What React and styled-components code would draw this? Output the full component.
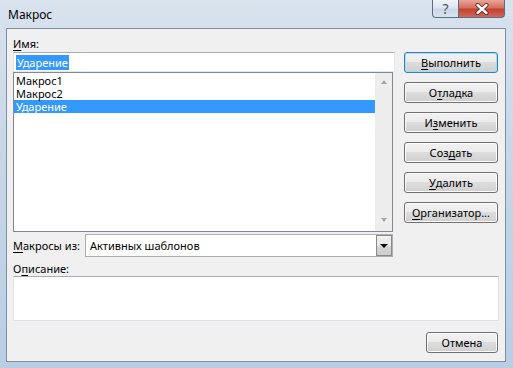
import React from "react";
import styled, { createGlobalStyle } from "styled-components";

const GlobalStyle = createGlobalStyle`
  html, body {
    margin: 0;
    padding: 0;
    background: #fff;
  }
  body {
    font-family: "Noto Sans", "Liberation Sans", sans-serif;
    font-size: 11px;
    color: #000;
  }
`;

const Window = styled.div`
  width: 513px;
  height: 368px;
  box-sizing: border-box;
  display: flex;
  flex-direction: column;
  padding: 0 7px 6px 6px;
  background: linear-gradient(180deg, #d9e3ee 0%, #cbd9e8 30%, #b9cde4 100%);
  overflow: hidden;
`;

const TitleBar = styled.div`
  height: 28px;
  display: flex;
  align-items: flex-start;
  position: relative;
`;

const Title = styled.div`
  font-size: 12px;
  line-height: 29px;
  padding-left: 2px;
  color: #000;
`;

const Caption = styled.div`
  position: absolute;
  right: 1px;
  top: 0;
  display: flex;
`;

const CapButton = styled.div`
  height: 18px;
  width: ${(p) => p.w}px;
  box-sizing: border-box;
  border: 1px solid #5b6d83;
  border-top: none;
  display: flex;
  align-items: center;
  justify-content: center;
  background: ${(p) =>
    p.close
      ? "linear-gradient(180deg, #e8a597 0%, #d46f60 45%, #c3422f 55%, #d2675a 100%)"
      : "linear-gradient(180deg, #eef3f8 0%, #dde6f0 45%, #cbd8e7 55%, #d8e3ef 100%)"};
  border-radius: ${(p) => (p.close ? "0 0 4px 0" : "0 0 0 4px")};
  border-left: ${(p) => (p.close ? "none" : "1px solid #5b6d83")};
  color: #46566a;
  font-size: 14px;
  line-height: 16px;
`;

const Client = styled.div`
  flex: 1;
  background: #f0f0f0;
  border: 1px solid #7e8ea3;
  display: flex;
  flex-direction: column;
  padding: 6px 7px 8px 6px;
`;

const TopGrid = styled.div`
  display: grid;
  grid-template-columns: 382px 94px;
  column-gap: 9px;
`;

const LeftCol = styled.div`
  display: flex;
  flex-direction: column;
`;

const RightCol = styled.div`
  display: flex;
  flex-direction: column;
  gap: 9px;
  padding-top: 17px;
`;

const Label = styled.div`
  height: ${(p) => p.h || 17}px;
  line-height: ${(p) => p.h || 17}px;
  white-space: nowrap;
  width: ${(p) => (p.w ? p.w + "px" : "auto")};
  flex-shrink: 0;
`;

const U = styled.span`
  text-decoration: underline;
  text-underline-offset: 2px;
`;

const TextBox = styled.div`
  height: 20px;
  box-sizing: border-box;
  background: #fff;
  border: 1px solid #abadb3;
  border-color: #abadb3 #e3e9ef #e3e9ef #e2e3ea;
  display: flex;
  align-items: center;
  padding-left: 2px;
`;

const Selected = styled.span`
  background: #3399ff;
  color: #fff;
  line-height: 15px;
  padding: 0 1px;
`;

const ListBox = styled.div`
  width: 380px;
  height: 160px;
  box-sizing: border-box;
  background: #fff;
  border: 1px solid #828790;
  display: flex;
`;

const Items = styled.div`
  flex: 1;
  padding-top: 1px;
`;

const Item = styled.div`
  height: 13px;
  line-height: 13px;
  padding-left: 2px;
  background: ${(p) => (p.active ? "#3399ff" : "transparent")};
  color: ${(p) => (p.active ? "#fff" : "#000")};
`;

const ScrollBar = styled.div`
  width: 17px;
  background: #ededed;
  display: flex;
  flex-direction: column;
  justify-content: space-between;
  align-items: center;
  padding: 7px 0 9px;
`;

const Arrow = styled.div`
  width: 0;
  height: 0;
  border-left: 3.5px solid transparent;
  border-right: 3.5px solid transparent;
  ${(p) =>
    p.up
      ? "border-bottom: 4px solid #a7a7a7;"
      : "border-top: 4px solid #a7a7a7;"}
`;

const Button = styled.div`
  height: 21px;
  width: ${(p) => (p.w ? p.w + "px" : "auto")};
  box-sizing: border-box;
  border: 1px solid ${(p) => (p.focus ? "#3c7fb1" : "#707070")};
  border-radius: 3px;
  background: linear-gradient(180deg, #f2f2f2 0%, #ebebeb 49%, #dddddd 50%, #cfcfcf 100%);
  box-shadow: inset 0 0 0 1px ${(p) => (p.focus ? "#9fdcf7" : "#fbfbfb")};
  display: flex;
  align-items: center;
  justify-content: center;
  white-space: nowrap;
  color: #000;
`;

const SourceRow = styled.div`
  display: flex;
  align-items: center;
  margin-top: 2px;
  height: 23px;
`;

const Combo = styled.div`
  width: 308px;
  height: 23px;
  box-sizing: border-box;
  background: #fff;
  border: 1px solid #abadb3;
  display: flex;
  align-items: center;
`;

const ComboText = styled.div`
  flex: 1;
  padding-left: 4px;
`;

const DropButton = styled.div`
  width: 16px;
  height: 21px;
  box-sizing: border-box;
  border: 1px solid #8a8a8a;
  background: linear-gradient(180deg, #f3f3f3 0%, #e6e6e6 50%, #d6d6d6 51%, #cdcdcd 100%);
  display: flex;
  align-items: center;
  justify-content: center;
`;

const DropArrow = styled.div`
  width: 0;
  height: 0;
  border-left: 4px solid transparent;
  border-right: 4px solid transparent;
  border-top: 4px solid #000;
`;

const DescBox = styled.div`
  width: 486px;
  height: 45px;
  box-sizing: border-box;
  background: #fff;
  border: 1px solid #abadb3;
  border-color: #abadb3 #dbdfe6 #dbdfe6 #e2e3ea;
`;

const Footer = styled.div`
  display: flex;
  justify-content: flex-end;
  margin-top: 11px;
`;

export default function App() {
  return (
    <>
      <GlobalStyle />
      <Window>
        <TitleBar>
          <Title>Макрос</Title>
          <Caption>
            <CapButton w={27}>?</CapButton>
            <CapButton w={46} close>
              <svg width="14" height="12" viewBox="0 0 14 12">
                <path
                  d="M2.5 2 L11.5 10 M11.5 2 L2.5 10"
                  stroke="#5a1b14"
                  strokeWidth="4"
                  strokeLinecap="round"
                />
                <path
                  d="M2.5 2 L11.5 10 M11.5 2 L2.5 10"
                  stroke="#fff"
                  strokeWidth="2.4"
                  strokeLinecap="round"
                />
              </svg>
            </CapButton>
          </Caption>
        </TitleBar>
        <Client>
          <TopGrid>
            <LeftCol>
              <Label>
                <U>И</U>мя:
              </Label>
              <TextBox>
                <Selected>Ударение</Selected>
              </TextBox>
              <ListBox>
                <Items>
                  <Item>Макрос1</Item>
                  <Item>Макрос2</Item>
                  <Item active>Ударение</Item>
                </Items>
                <ScrollBar>
                  <Arrow up />
                  <Arrow />
                </ScrollBar>
              </ListBox>
            </LeftCol>
            <RightCol>
              <Button focus>
                <U>В</U>ыполнить
              </Button>
              <Button>
                О<U>т</U>ладка
              </Button>
              <Button>
                И<U>з</U>менить
              </Button>
              <Button>
                Соз<U>д</U>ать
              </Button>
              <Button>
                <U>У</U>далить
              </Button>
              <Button>
                <U>О</U>рганизатор...
              </Button>
            </RightCol>
          </TopGrid>
          <SourceRow>
            <Label w={72} h={23}>
              <U>М</U>акросы из:
            </Label>
            <Combo>
              <ComboText>Активных шаблонов</ComboText>
              <DropButton>
                <DropArrow />
              </DropButton>
            </Combo>
          </SourceRow>
          <Label h={15} style={{ marginTop: 4 }}>
            О<U>п</U>исание:
          </Label>
          <DescBox />
          <Footer>
            <Button w={72}>Отмена</Button>
          </Footer>
        </Client>
      </Window>
    </>
  );
}
